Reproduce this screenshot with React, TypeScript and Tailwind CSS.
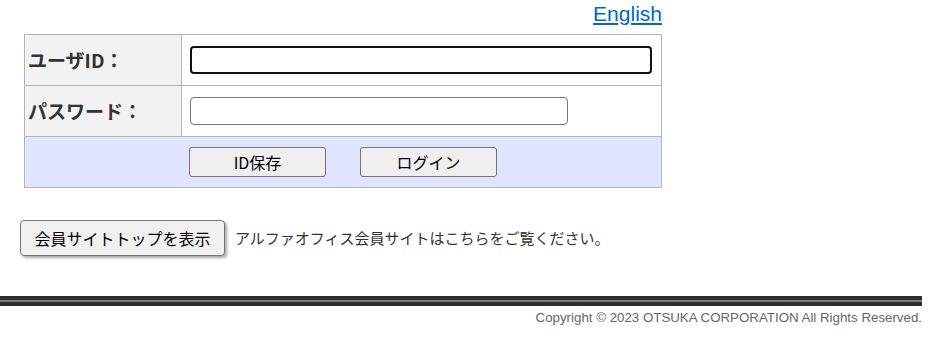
export default function App() {
  const jp = "font-['Noto_Sans_CJK_JP','Noto_Sans',sans-serif]";

  return (
    <div className={`w-[922px] bg-white text-[#333] ${jp}`}>
      {/* Login box */}
      <div className="ml-[24px] w-[638px]">
        <div className="flex h-[34px] justify-end pt-[1px]">
          <a
            href="#"
            className="font-['Liberation_Sans',sans-serif] text-[21px] leading-[26px] text-[#0066cc] underline"
          >
            English
          </a>
        </div>

        <table className="w-[638px] border-collapse border border-[#b4b4b4]">
          <tbody>
            <tr className="h-[51px]">
              <th className="w-[157px] border border-[#b4b4b4] bg-[#f2f2f2] pl-[3px] text-left text-[19px] font-bold text-[#333]">
                ユーザID：
              </th>
              <td className="border border-[#b4b4b4] pl-[8px]">
                <input
                  type="text"
                  className="block h-[28px] w-[462px] rounded-[4px] border-2 border-[#111] bg-white px-2 outline-none"
                />
              </td>
            </tr>
            <tr className="h-[51px]">
              <th className="border border-[#b4b4b4] bg-[#f2f2f2] pl-[3px] text-left text-[19px] font-bold text-[#333]">
                パスワード：
              </th>
              <td className="border border-[#b4b4b4] pl-[8px]">
                <input
                  type="password"
                  className="block h-[28px] w-[378px] rounded-[4px] border border-[#767676] bg-white px-2 outline-none"
                />
              </td>
            </tr>
            <tr className="h-[51px]">
              <td colSpan={2} className="border border-[#b4b4b4] bg-[#e0e4ff]">
                <div className="flex justify-center gap-[34px]">
                  <button className="h-[30px] w-[137px] rounded-[3px] border border-[#767676] bg-[#efefef] text-[16px] leading-none text-black">
                    ID保存
                  </button>
                  <button className="h-[30px] w-[137px] rounded-[3px] border border-[#767676] bg-[#efefef] text-[16px] leading-none text-black">
                    ログイン
                  </button>
                </div>
              </td>
            </tr>
          </tbody>
        </table>
      </div>

      {/* Member site link */}
      <div className="ml-[20px] mt-[32px] flex items-center gap-[10px]">
        <button className="h-[36px] w-[205px] rounded-[4px] border border-[#767676] bg-[#f0f0f0] text-[16px] leading-none text-black shadow-[2px_2px_3px_rgba(0,0,0,0.35)]">
          会員サイトトップを表示
        </button>
        <span className="text-[15px] text-[#333]">
          アルファオフィス会員サイトはこちらをご覧ください。
        </span>
      </div>

      {/* Footer */}
      <div className="mt-[40px]">
        <div className="h-[4px] bg-[#2f2f2f]" />
        <div className="h-[2px] bg-[#7a7a7a]" />
        <div className="h-[4px] bg-[#2f2f2f]" />
        <p className="pt-[4px] text-right font-['Liberation_Sans',sans-serif] text-[13.3px] leading-[16px] text-[#666]">
          Copyright © 2023 OTSUKA CORPORATION All Rights Reserved.
        </p>
      </div>
    </div>
  );
}
